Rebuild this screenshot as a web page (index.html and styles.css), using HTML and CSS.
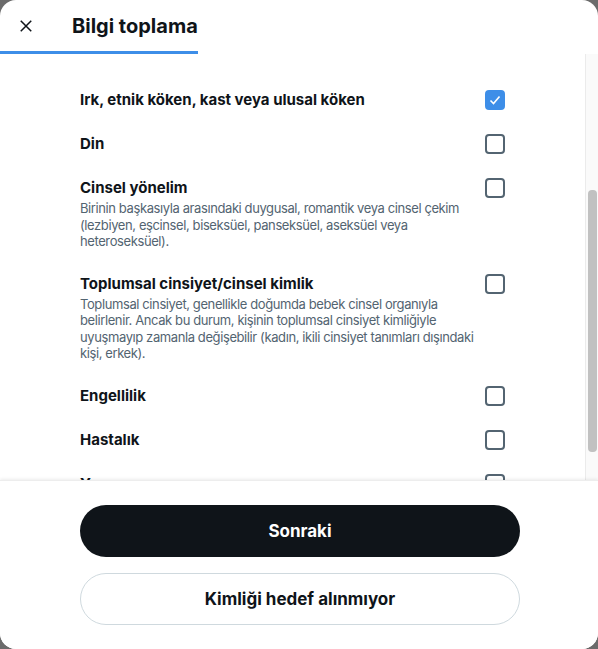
FILE: index.html
```html
<!DOCTYPE html>
<html lang="tr">
<head>
    <meta charset="UTF-8">
    <meta name="viewport" content="width=device-width, initial-scale=1.0">
    <title>Bilgi toplama</title>
    <link rel="stylesheet" href="styles.css">
</head>
<body>
    <div class="modal">
        <div class="modal-header">
            <div class="header-tab">
                <button class="close-btn" aria-label="Kapat">
                    <svg viewBox="0 0 24 24" width="18" height="18"><path d="M5 5l14 14M19 5L5 19" stroke="#0f1419" stroke-width="2" fill="none"/></svg>
                </button>
                <h1 class="modal-title">Bilgi toplama</h1>
            </div>
        </div>

        <div class="modal-body">
            <div class="option-list">
                <label class="option-row">
                    <div class="option-text">
                        <div class="option-title">Irk, etnik köken, kast veya ulusal köken</div>
                    </div>
                    <span class="checkbox checked">
                        <svg viewBox="0 0 20 20" width="20" height="20"><path d="M5.5 10.5l3 3 6-7" stroke="#fff" stroke-width="1.6" fill="none"/></svg>
                    </span>
                </label>
                <label class="option-row">
                    <div class="option-text">
                        <div class="option-title">Din</div>
                    </div>
                    <span class="checkbox"></span>
                </label>
                <label class="option-row">
                    <div class="option-text">
                        <div class="option-title">Cinsel yönelim</div>
                        <div class="option-desc">Birinin başkasıyla arasındaki duygusal, romantik veya cinsel çekim (lezbiyen, eşcinsel, biseksüel, panseksüel, aseksüel veya heteroseksüel).</div>
                    </div>
                    <span class="checkbox"></span>
                </label>
                <label class="option-row">
                    <div class="option-text">
                        <div class="option-title">Toplumsal cinsiyet/cinsel kimlik</div>
                        <div class="option-desc">Toplumsal cinsiyet, genellikle doğumda bebek cinsel organıyla belirlenir. Ancak bu durum, kişinin toplumsal cinsiyet kimliğiyle uyuşmayıp zamanla değişebilir (kadın, ikili cinsiyet tanımları dışındaki kişi, erkek).</div>
                    </div>
                    <span class="checkbox"></span>
                </label>
                <label class="option-row">
                    <div class="option-text">
                        <div class="option-title">Engellilik</div>
                    </div>
                    <span class="checkbox"></span>
                </label>
                <label class="option-row">
                    <div class="option-text">
                        <div class="option-title">Hastalık</div>
                    </div>
                    <span class="checkbox"></span>
                </label>
                <label class="option-row">
                    <div class="option-text">
                        <div class="option-title">Yaş</div>
                    </div>
                    <span class="checkbox"></span>
                </label>
            </div>
            <div class="scroll-track">
                <div class="scroll-thumb"></div>
            </div>
        </div>

        <div class="modal-footer">
            <button class="btn btn-primary">Sonraki</button>
            <button class="btn btn-outline">Kimliği hedef alınmıyor</button>
        </div>
    </div>
</body>
</html>
```

FILE: styles.css
```css
html, body {
    margin: 0;
    height: 100%;
}

body {
    background: #6b6b6b;
    font-family: Inter, "Noto Sans", Arial, sans-serif;
    color: #0f1419;
}

.modal {
    width: 598px;
    height: 649px;
    background: #ffffff;
    border-radius: 16px;
    overflow: hidden;
    display: flex;
    flex-direction: column;
}

/* header with the active tab underline */
.modal-header {
    height: 54px;
    flex-shrink: 0;
    display: flex;
    align-items: flex-end;
}

.header-tab {
    width: 198px;
    height: 51px;
    display: flex;
    align-items: center;
    border-bottom: 3px solid #3d8ee8;
}

.close-btn {
    width: 36px;
    height: 36px;
    margin-left: 8px;
    padding: 0;
    border: none;
    background: none;
    display: flex;
    align-items: center;
    justify-content: center;
    cursor: pointer;
}

.modal-title {
    margin: 0 0 0 28px;
    font-size: 20px;
    font-weight: 700;
    line-height: 26px;
}

/* scrolling list */
.modal-body {
    flex: 1;
    min-height: 0;
    display: flex;
    overflow: hidden;
}

.option-list {
    flex: 1;
    padding: 24px 80px 0 80px;
}

.option-row {
    display: flex;
    justify-content: space-between;
    align-items: flex-start;
    gap: 8px;
    padding: 12px 0;
    cursor: pointer;
}

.option-title {
    font-size: 15px;
    font-weight: 700;
    line-height: 20px;
}

.option-desc {
    margin-top: 2px;
    font-size: 13px;
    letter-spacing: -0.4px;
    line-height: 16.5px;
    color: #536471;
}

.checkbox {
    width: 20px;
    height: 20px;
    flex-shrink: 0;
    box-sizing: border-box;
    border: 2px solid #536471;
    border-radius: 4px;
    display: flex;
}

.checkbox.checked {
    background: #3d8ee8;
    border-color: #3d8ee8;
}

.checkbox.checked svg {
    margin: -2px;
}

.scroll-track {
    width: 13px;
    box-sizing: border-box;
    flex-shrink: 0;
    background: #fafafa;
    border-left: 1px solid #ebebeb;
    padding: 136px 1px 0 2px;
}

.scroll-thumb {
    height: 262px;
    border-radius: 4px;
    background: #c1c1c1;
}

/* footer buttons */
.modal-footer {
    flex-shrink: 0;
    padding: 24px 78px 24px 80px;
    display: flex;
    flex-direction: column;
    gap: 16px;
    box-shadow: 0 -1px 3px rgba(0, 0, 0, 0.08);
    border-top: 1px solid #ededed;
    position: relative;
    background: #ffffff;
}

.btn {
    height: 52px;
    border-radius: 26px;
    font-family: inherit;
    font-size: 17px;
    font-weight: 700;
    cursor: pointer;
}

.btn-primary {
    background: #0f1419;
    color: #ffffff;
    border: none;
}

.btn-outline {
    background: #ffffff;
    color: #0f1419;
    border: 1px solid #cfd9de;
}
```
